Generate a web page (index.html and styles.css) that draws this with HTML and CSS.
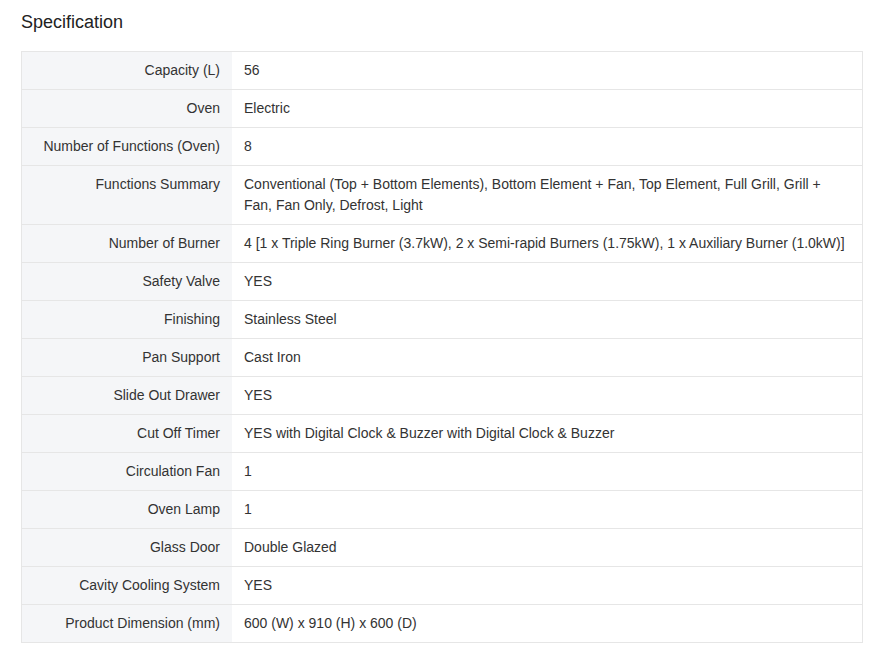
FILE: index.html
```html
<!DOCTYPE html>
<html lang="en">
<head>
  <meta charset="UTF-8" />
  <title>Specification</title>
  <link rel="stylesheet" href="styles.css">
</head>
<body>
  <section class="spec">
    <h2>Specification</h2>
    <table class="spec-table">
      <tr><th>Capacity (L)</th><td>56</td></tr>
      <tr><th>Oven</th><td>Electric</td></tr>
      <tr><th>Number of Functions (Oven)</th><td>8</td></tr>
      <tr><th>Functions Summary</th><td>Conventional (Top + Bottom Elements), Bottom Element + Fan, Top Element, Full Grill, Grill + Fan, Fan Only, Defrost, Light</td></tr>
      <tr><th>Number of Burner</th><td>4 [1 x Triple Ring Burner (3.7kW), 2 x Semi-rapid Burners (1.75kW), 1 x Auxiliary Burner (1.0kW)]</td></tr>
      <tr><th>Safety Valve</th><td>YES</td></tr>
      <tr><th>Finishing</th><td>Stainless Steel</td></tr>
      <tr><th>Pan Support</th><td>Cast Iron</td></tr>
      <tr><th>Slide Out Drawer</th><td>YES</td></tr>
      <tr><th>Cut Off Timer</th><td>YES with Digital Clock &amp; Buzzer with Digital Clock &amp; Buzzer</td></tr>
      <tr><th>Circulation Fan</th><td>1</td></tr>
      <tr><th>Oven Lamp</th><td>1</td></tr>
      <tr><th>Glass Door</th><td>Double Glazed</td></tr>
      <tr><th>Cavity Cooling System</th><td>YES</td></tr>
      <tr><th>Product Dimension (mm)</th><td>600 (W) x 910 (H) x 600 (D)</td></tr>
    </table>
  </section>
</body>
</html>
```
FILE: styles.css
```css
body {
  font-family: "Liberation Sans", Arial, sans-serif;
  background: #fff;
  color: #333;
  margin: 0;
  padding: 0;
}
.spec {
  padding: 10px 17px 16px 21px;
}
.spec h2 {
  margin: 0 0 17px;
  font-size: 18px;
  line-height: 24px;
  font-weight: normal;
  color: #222;
}
.spec-table {
  width: 100%;
  border-collapse: collapse;
  border: 1px solid #e6e6e6;
  font-size: 14px;
  line-height: 21px;
}
.spec-table th,
.spec-table td {
  padding: 8px 12px;
  border-top: 1px solid #e6e6e6;
  vertical-align: top;
  font-weight: normal;
}
.spec-table th {
  width: 186px;
  text-align: right;
  background: #f5f6f8;
  color: #333;
}
.spec-table td {
  text-align: left;
}
```
